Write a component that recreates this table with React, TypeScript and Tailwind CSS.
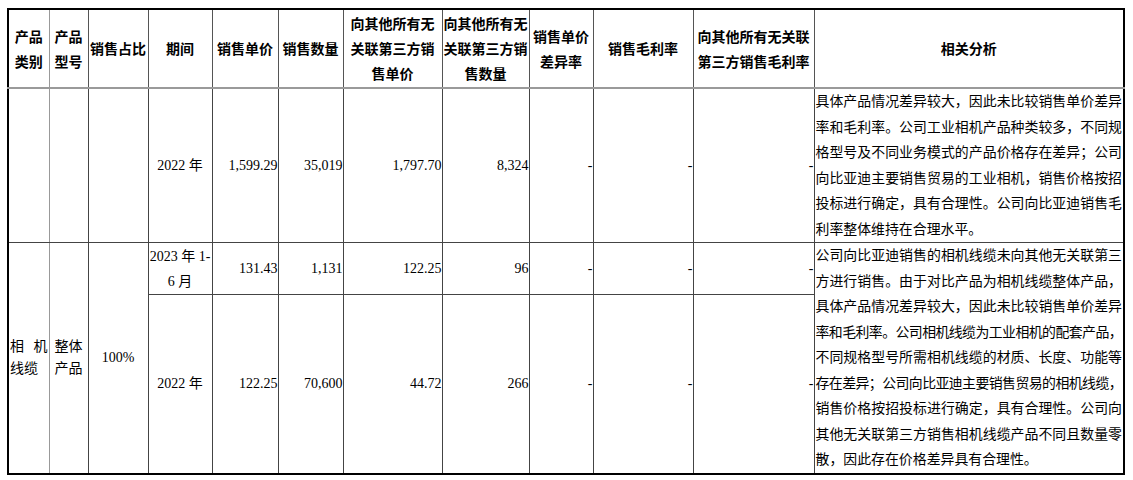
const th =
  "border border-[#555] p-0 text-center align-middle font-bold text-[14px] leading-[25px]";
const td = "border border-[#444] p-0 align-middle text-[14px] leading-[20px]";
const num = td + " text-right";

type Line = { text: string; tight?: boolean };

function Analysis({ lines }: { lines: Line[] }) {
  return (
    <div className="px-px text-[13.9px] leading-[25.5px]">
      {lines.map((l, i) => (
        <div
          key={i}
          className={
            "whitespace-nowrap " +
            (i < lines.length - 1 ? "[text-align-last:justify] " : "text-left ") +
            (l.tight ? "tracking-[-0.65px]" : "")
          }
        >
          {l.text}
        </div>
      ))}
    </div>
  );
}

const firstAnalysis: Line[] = [
  { text: "具体产品情况差异较大，因此未比较销售单价差异" },
  { text: "率和毛利率。公司工业相机产品种类较多，不同规" },
  { text: "格型号及不同业务模式的产品价格存在差异；公司" },
  { text: "向比亚迪主要销售贸易的工业相机，销售价格按招" },
  { text: "投标进行确定，具有合理性。公司向比亚迪销售毛" },
  { text: "利率整体维持在合理水平。" },
];

const secondAnalysis: Line[] = [
  { text: "公司向比亚迪销售的相机线缆未向其他无关联第三" },
  { text: "方进行销售。由于对比产品为相机线缆整体产品，" },
  { text: "具体产品情况差异较大，因此未比较销售单价差异" },
  { text: "率和毛利率。公司相机线缆为工业相机的配套产品，", tight: true },
  { text: "不同规格型号所需相机线缆的材质、长度、功能等" },
  { text: "存在差异；公司向比亚迪主要销售贸易的相机线缆，", tight: true },
  { text: "销售价格按招投标进行确定，具有合理性。公司向" },
  { text: "其他无关联第三方销售相机线缆产品不同且数量零" },
  { text: "散，因此存在价格差异具有合理性。" },
];

export default function App() {
  return (
    <div className="h-[480px] w-[1133px] bg-white pl-[7px] pt-[8px] text-black">
      <table className="table-fixed border-collapse border-2 border-black font-['Liberation_Serif','Noto_Sans_CJK_SC',serif]">
        <colgroup>
          <col className="w-[41px]" />
          <col className="w-[39px]" />
          <col className="w-[60px]" />
          <col className="w-[64px]" />
          <col className="w-[66px]" />
          <col className="w-[65px]" />
          <col className="w-[99px]" />
          <col className="w-[87px]" />
          <col className="w-[64px]" />
          <col className="w-[100px]" />
          <col className="w-[121px]" />
          <col className="w-[310px]" />
        </colgroup>
        <thead className="font-['Noto_Sans_CJK_SC',sans-serif]">
          <tr className="h-[79px] border-b-2 border-b-[#9a9a9a]">
            <th className={th + " border-r-[#999]"}>
              产品
              <br />
              类别
            </th>
            <th className={th}>
              产品
              <br />
              型号
            </th>
            <th className={th}>销售占比</th>
            <th className={th}>期间</th>
            <th className={th}>销售单价</th>
            <th className={th}>销售数量</th>
            <th className={th}>
              向其他所有无
              <br />
              关联第三方销
              <br />
              售单价
            </th>
            <th className={th}>
              向其他所有无
              <br />
              关联第三方销
              <br />
              售数量
            </th>
            <th className={th}>
              销售单价
              <br />
              差异率
            </th>
            <th className={th}>销售毛利率</th>
            <th className={th}>
              向其他所有无关联
              <br />
              第三方销售毛利率
            </th>
            <th className={th}>相关分析</th>
          </tr>
        </thead>
        <tbody>
          <tr className="h-[154px]">
            <td className={td + " border-r-[#999]"} />
            <td className={td} />
            <td className={td} />
            <td className={td + " text-center"}>2022 年</td>
            <td className={num}>1,599.29</td>
            <td className={num}>35,019</td>
            <td className={num}>1,797.70</td>
            <td className={num}>8,324</td>
            <td className={num}>-</td>
            <td className={num}>-</td>
            <td className={num}>-</td>
            <td className={td}>
              <Analysis lines={firstAnalysis} />
            </td>
          </tr>
          <tr className="h-[52px]">
            <td rowSpan={2} className={td + " border-r-[#999] px-px leading-[22px]"}>
              <div className="flex justify-between">
                <span>相</span>
                <span>机</span>
              </div>
              <div>线缆</div>
            </td>
            <td rowSpan={2} className={td + " text-center leading-[22px]"}>
              整体
              <br />
              产品
            </td>
            <td rowSpan={2} className={td + " text-center"}>
              100%
            </td>
            <td className={td + " text-center leading-[25px]"}>
              2023 年 1-
              <br />6 月
            </td>
            <td className={num}>131.43</td>
            <td className={num}>1,131</td>
            <td className={num}>122.25</td>
            <td className={num}>96</td>
            <td className={num}>-</td>
            <td className={num}>-</td>
            <td className={num}>-</td>
            <td rowSpan={2} className={td}>
              <Analysis lines={secondAnalysis} />
            </td>
          </tr>
          <tr className="h-[178px]">
            <td className={td + " text-center"}>2022 年</td>
            <td className={num}>122.25</td>
            <td className={num}>70,600</td>
            <td className={num}>44.72</td>
            <td className={num}>266</td>
            <td className={num}>-</td>
            <td className={num}>-</td>
            <td className={num}>-</td>
          </tr>
        </tbody>
      </table>
    </div>
  );
}
